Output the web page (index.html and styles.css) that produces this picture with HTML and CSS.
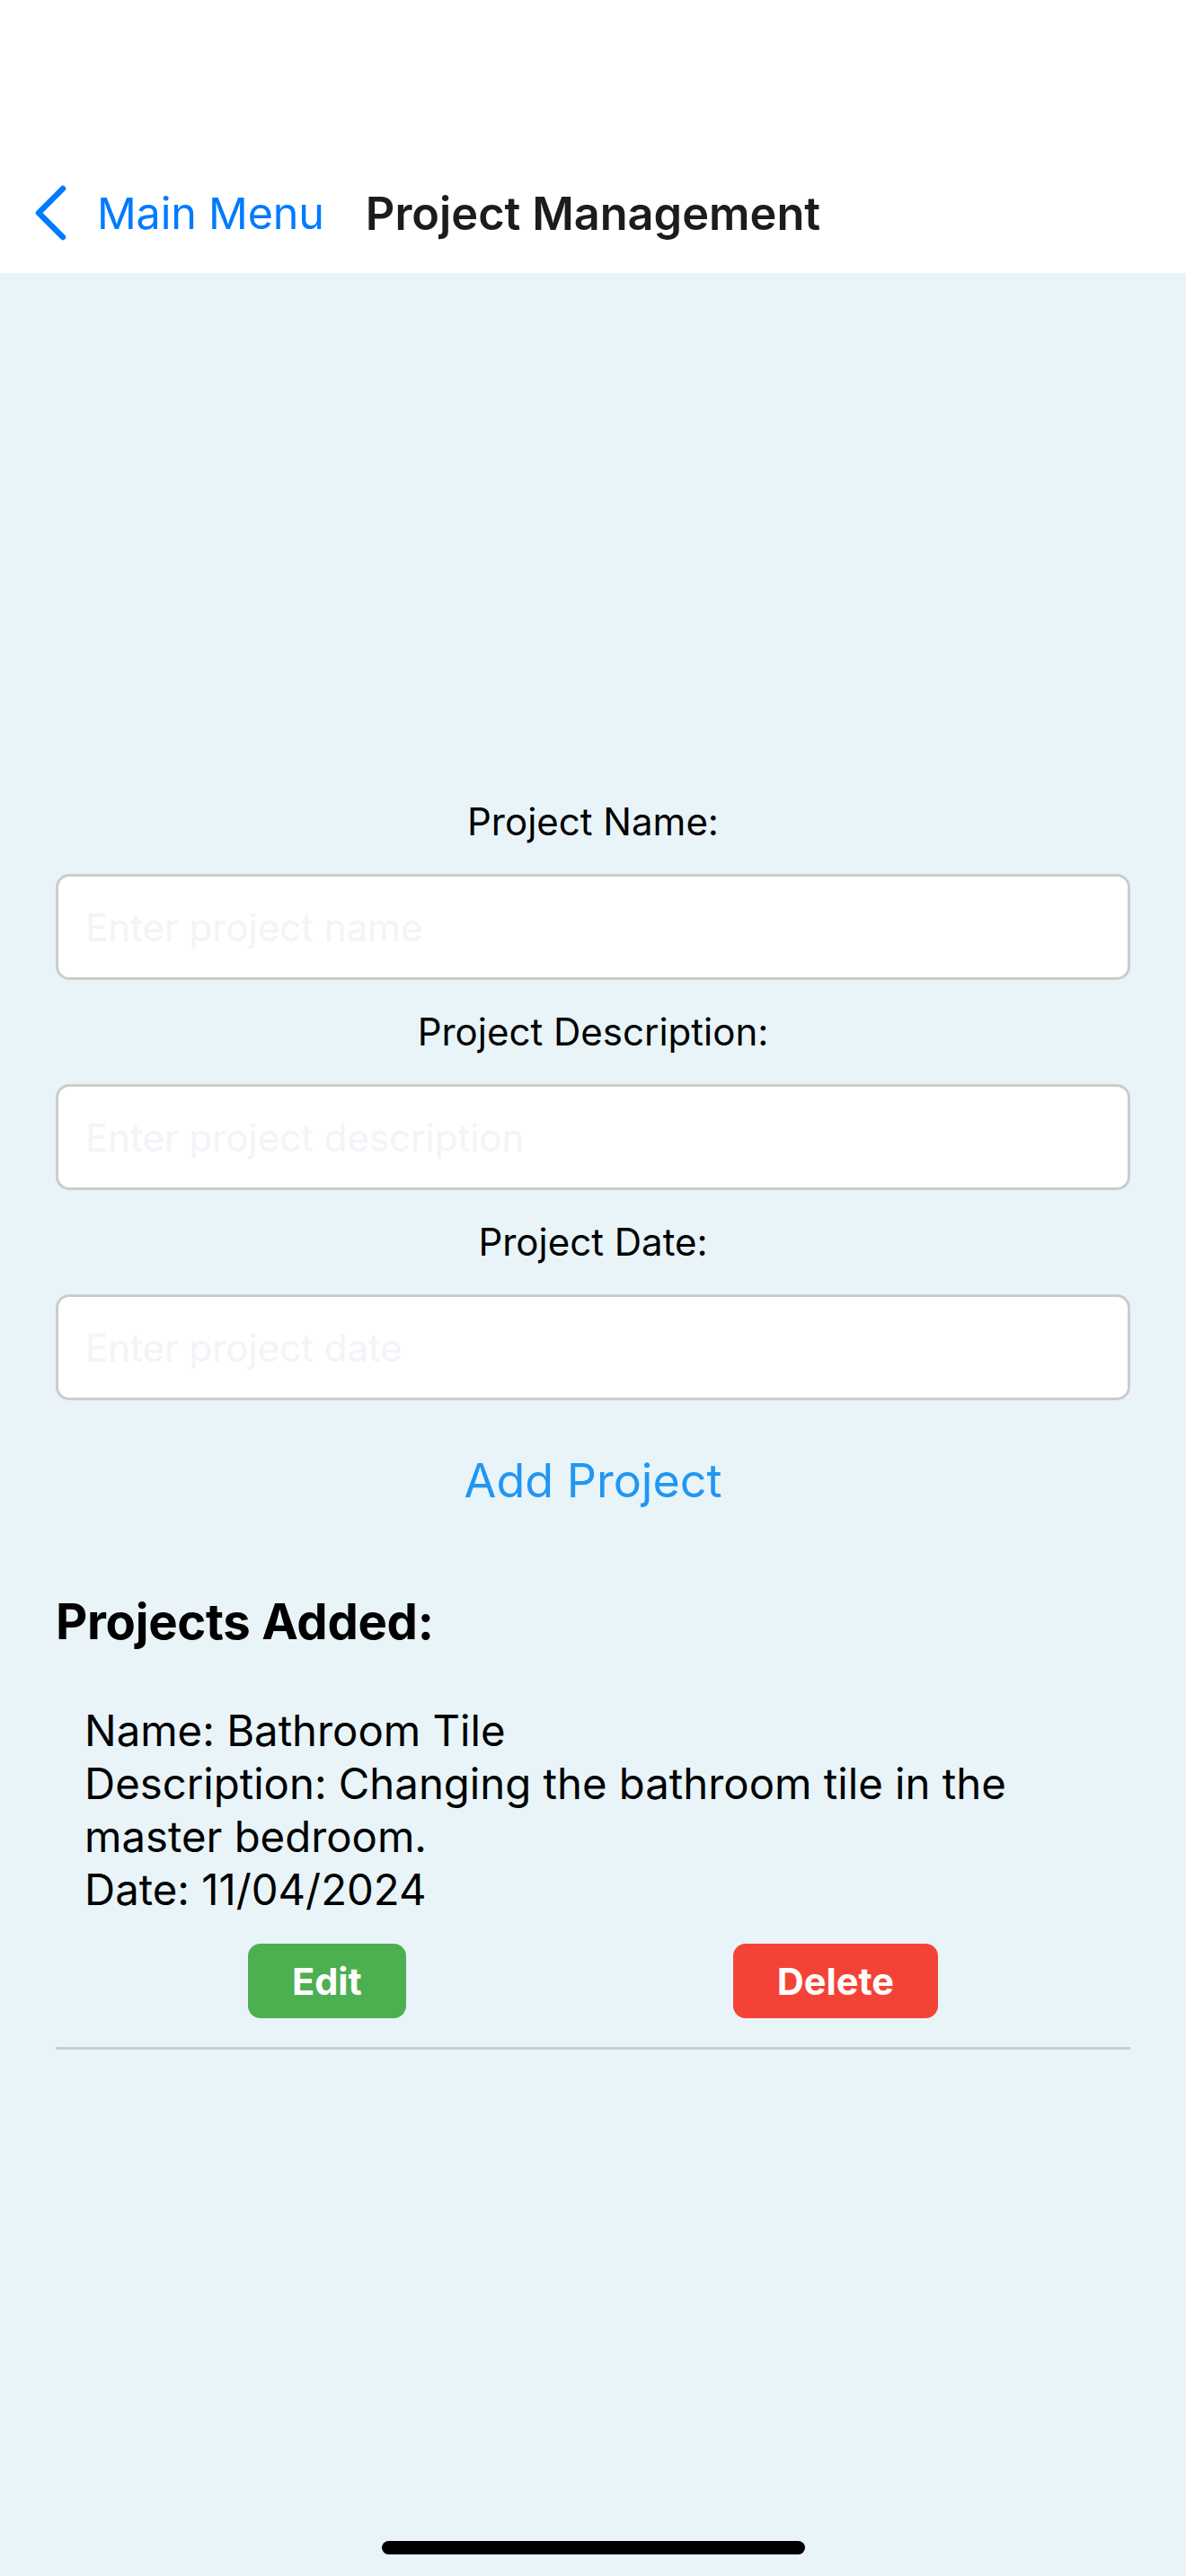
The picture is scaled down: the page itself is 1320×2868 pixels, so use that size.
FILE: index.html
```html
<!DOCTYPE html>
<html lang="en">
<head>
<meta charset="utf-8">
<title>Project Management</title>
<link rel="stylesheet" href="styles.css">
</head>
<body>
<div class="screen">
  <header class="header">
    <nav class="nav">
      <div class="back">
        <svg class="chevron" width="40" height="66" viewBox="0 0 40 66" aria-hidden="true">
          <path d="M32 6 L5 33 L32 60" fill="none" stroke="#007AFF" stroke-width="6.5" stroke-linecap="round" stroke-linejoin="round"/>
        </svg>
        <span class="back-text">Main Menu</span>
      </div>
      <div class="title">Project Management</div>
      <div class="nav-spacer"></div>
    </nav>
  </header>

  <main class="content">
    <form class="form">
      <label class="label">Project Name:</label>
      <input class="input" type="text" placeholder="Enter project name">
      <label class="label">Project Description:</label>
      <input class="input" type="text" placeholder="Enter project description">
      <label class="label">Project Date:</label>
      <input class="input" type="text" placeholder="Enter project date">
      <button class="add-btn" type="button">Add Project</button>
    </form>

    <section class="list">
      <h2 class="list-title">Projects Added:</h2>
      <div class="item">
        <div class="item-text">
          <div>Name: Bathroom Tile</div>
          <div>Description: Changing the bathroom tile in the master bedroom.</div>
          <div>Date: 11/04/2024</div>
        </div>
        <div class="actions">
          <button class="btn btn-edit" type="button">Edit</button>
          <button class="btn btn-delete" type="button">Delete</button>
        </div>
      </div>
    </section>
  </main>

  <div class="home-indicator"></div>
</div>
</body>
</html>
```

FILE: styles.css
```css
* { box-sizing: border-box; }

html, body {
  margin: 0;
  padding: 0;
}

body {
  font-family: Inter, "Noto Sans", "Liberation Sans", sans-serif;
  background: #E8F4F8;
}

.screen {
  position: relative;
  width: 1320px;
  height: 2868px;
  overflow: hidden;
  background: #E8F4F8;
}

.header {
  height: 304px;
  background: #ffffff;
  display: flex;
  flex-direction: column;
  justify-content: flex-end;
}

.nav {
  height: 132px;
  display: grid;
  grid-template-columns: 1fr auto 1fr;
  align-items: center;
  padding-bottom: 2px;
}

.back {
  display: flex;
  align-items: center;
  padding-left: 38px;
}

.chevron {
  display: block;
  flex: none;
}

.back-text {
  margin-left: 30px;
  font-size: 48.5px;
  color: #007AFF;
  letter-spacing: -0.2px;
}

.title {
  font-size: 50.5px;
  font-weight: 600;
  color: #1c1c1e;
  letter-spacing: 0px;
}

.content {
  padding: 0 62px;
}

.form {
  display: flex;
  flex-direction: column;
  align-items: stretch;
  padding-top: 586px;
}

.label {
  text-align: center;
  font-size: 42px;
  line-height: 50px;
  color: #000;
  margin-bottom: 33px;
}

.input {
  height: 118px;
  border: 3px solid #cccccc;
  border-radius: 15px;
  background: #ffffff;
  padding: 0 30px;
  font-family: inherit;
  font-size: 42px;
  margin: 0 0 33px 0;
  outline: none;
}

.input::placeholder {
  color: #f3f3f8;
  opacity: 1;
}

.add-btn {
  align-self: center;
  margin-top: 25px;
  background: none;
  border: none;
  padding: 0;
  font-family: inherit;
  font-size: 52px;
  line-height: 64px;
  color: #2196F3;
}

.list {
  margin-top: 92px;
}

.list-title {
  margin: 0;
  font-size: 54.5px;
  line-height: 64px;
  font-weight: 700;
  color: #000;
  letter-spacing: -0.3px;
}

.item {
  margin-top: 30px;
  padding: 30px 32px 32px;
  border-bottom: 3px solid #cccccc;
}

.item-text {
  font-size: 47.3px;
  line-height: 59px;
  color: #000;
}

.actions {
  display: flex;
  justify-content: space-around;
  margin-top: 31px;
}

.btn {
  height: 83px;
  padding: 0 49px;
  border: none;
  border-radius: 14px;
  font-family: inherit;
  font-size: 41.5px;
  font-weight: 700;
  color: #ffffff;
}

.btn-edit { background: #4CAF50; }
.btn-delete { background: #F44336; }

.home-indicator {
  position: absolute;
  left: 425px;
  top: 2829px;
  width: 471px;
  height: 15px;
  border-radius: 8px;
  background: #000;
}
```
